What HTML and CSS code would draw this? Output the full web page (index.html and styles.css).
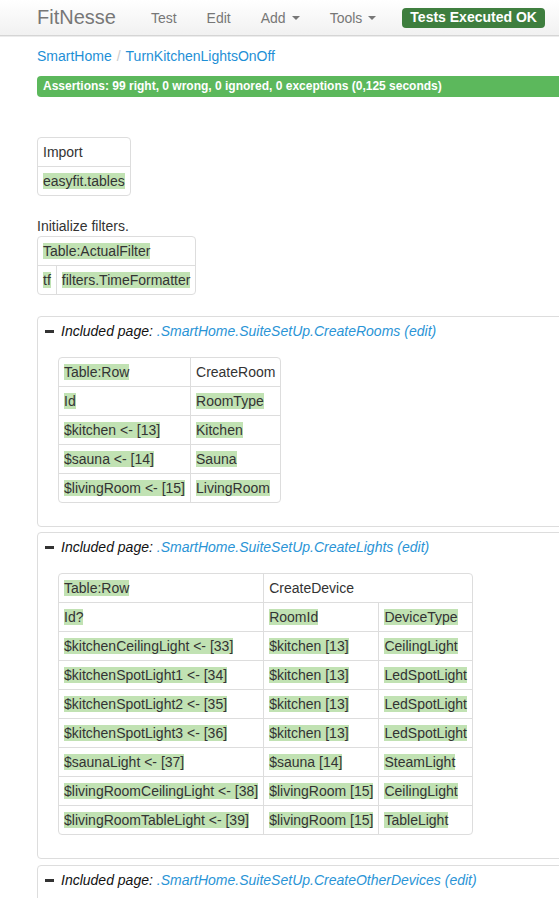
FILE: index.html
```html
<!DOCTYPE html>
<html lang="en">
<head>
<meta charset="utf-8">
<title>TurnKitchenLightsOnOff</title>
<link rel="stylesheet" href="styles.css">
</head>
<body>
<nav class="navbar">
  <a class="brand" href="#">FitNesse</a>
  <ul class="nav">
    <li><a href="#">Test</a></li>
    <li><a href="#">Edit</a></li>
    <li><a href="#">Add<span class="caret"></span></a></li>
    <li><a href="#">Tools<span class="caret"></span></a></li>
  </ul>
  <span class="status">Tests Executed OK</span>
</nav>
<main class="page">
  <div class="breadcrumb"><a href="#">SmartHome</a><span class="sep">/</span><a href="#">TurnKitchenLightsOnOff</a></div>
  <div class="summary">Assertions: 99 right, 0 wrong, 0 ignored, 0 exceptions (0,125 seconds)</div>

  <table class="fit first">
    <tr><td>Import</td></tr>
    <tr><td><span class="pass">easyfit.tables</span></td></tr>
  </table>

  <p class="text">Initialize filters.</p>
  <table class="fit">
    <tr><td colspan="2"><span class="pass">Table:ActualFilter</span></td></tr>
    <tr><td><span class="pass">tf</span></td><td><span class="pass">filters.TimeFormatter</span></td></tr>
  </table>

  <div class="included first-box">
    <div class="inc-head"><span class="minus"></span><span class="inc-label">Included page: </span><a class="inc-link" href="#">.SmartHome.SuiteSetUp.CreateRooms</a><a class="inc-link edit" href="#">(edit)</a></div>
    <table class="fit inner">
      <tr><td><span class="pass">Table:Row</span></td><td>CreateRoom</td></tr>
      <tr><td><span class="pass">Id</span></td><td><span class="pass">RoomType</span></td></tr>
      <tr><td><span class="pass">$kitchen &lt;- [13]</span></td><td><span class="pass">Kitchen</span></td></tr>
      <tr><td><span class="pass">$sauna &lt;- [14]</span></td><td><span class="pass">Sauna</span></td></tr>
      <tr><td><span class="pass">$livingRoom &lt;- [15]</span></td><td><span class="pass">LivingRoom</span></td></tr>
    </table>
  </div>

  <div class="included">
    <div class="inc-head"><span class="minus"></span><span class="inc-label">Included page: </span><a class="inc-link" href="#">.SmartHome.SuiteSetUp.CreateLights</a><a class="inc-link edit" href="#">(edit)</a></div>
    <table class="fit inner">
      <tr><td><span class="pass">Table:Row</span></td><td colspan="2">CreateDevice</td></tr>
      <tr><td><span class="pass">Id?</span></td><td><span class="pass">RoomId</span></td><td><span class="pass">DeviceType</span></td></tr>
      <tr><td><span class="pass">$kitchenCeilingLight &lt;- [33]</span></td><td><span class="pass">$kitchen [13]</span></td><td><span class="pass">CeilingLight</span></td></tr>
      <tr><td><span class="pass">$kitchenSpotLight1 &lt;- [34]</span></td><td><span class="pass">$kitchen [13]</span></td><td><span class="pass">LedSpotLight</span></td></tr>
      <tr><td><span class="pass">$kitchenSpotLight2 &lt;- [35]</span></td><td><span class="pass">$kitchen [13]</span></td><td><span class="pass">LedSpotLight</span></td></tr>
      <tr><td><span class="pass">$kitchenSpotLight3 &lt;- [36]</span></td><td><span class="pass">$kitchen [13]</span></td><td><span class="pass">LedSpotLight</span></td></tr>
      <tr><td><span class="pass">$saunaLight &lt;- [37]</span></td><td><span class="pass">$sauna [14]</span></td><td><span class="pass">SteamLight</span></td></tr>
      <tr><td><span class="pass">$livingRoomCeilingLight &lt;- [38]</span></td><td><span class="pass">$livingRoom [15]</span></td><td><span class="pass">CeilingLight</span></td></tr>
      <tr><td><span class="pass">$livingRoomTableLight &lt;- [39]</span></td><td><span class="pass">$livingRoom [15]</span></td><td><span class="pass">TableLight</span></td></tr>
    </table>
  </div>

  <div class="included last-box">
    <div class="inc-head"><span class="minus"></span><span class="inc-label">Included page: </span><a class="inc-link" href="#">.SmartHome.SuiteSetUp.CreateOtherDevices</a><a class="inc-link edit" href="#">(edit)</a></div>
  </div>
</main>
</body>
</html>
```

FILE: styles.css
```css
html, body {
  overflow: hidden;
}
body {
  margin: 0;
  font-family: "Liberation Sans", Arial, sans-serif;
  font-size: 14px;
  line-height: 20px;
  color: #333;
  background: #fff;
}
a {
  text-decoration: none;
}

/* navbar */
.navbar {
  display: flex;
  align-items: center;
  height: 35px;
  padding-left: 37px;
  background: linear-gradient(#ffffff, #f1f1f1);
  border-bottom: 1px solid #d5d5d5;
  box-shadow: 0 1px 0 #ececec;
}
.brand {
  font-size: 20px;
  line-height: 24px;
  color: #777;
  padding-right: 20px;
  margin-top: -1px;
}
.nav {
  display: flex;
  list-style: none;
  margin: 0;
  padding: 0;
}
.nav a {
  display: block;
  padding: 0 15px;
  color: #777;
  font-size: 14px;
  line-height: 20px;
}
.caret {
  display: inline-block;
  width: 0;
  height: 0;
  margin-left: 6px;
  vertical-align: middle;
  border-top: 4px solid #777;
  border-left: 4px solid transparent;
  border-right: 4px solid transparent;
  margin-top: -2px;
}
.status {
  margin-left: 11px;
  padding: 1px 8px 2px;
  background: #3e7e3e;
  color: #fff;
  font-weight: bold;
  font-size: 14px;
  line-height: 17px;
  border-radius: 4px;
}

/* page */
.page {
  margin-left: 37px;
  margin-right: -40px;
  padding-bottom: 40px;
}
.breadcrumb {
  margin-top: 10px;
  line-height: 20px;
}
.breadcrumb a {
  color: #1e8fd6;
}
.sep {
  color: #ccc;
  padding: 0 5px;
}
.summary {
  margin-top: 10px;
  height: 21px;
  line-height: 21px;
  padding-left: 6px;
  background: #5cb85c;
  color: #fff;
  font-weight: bold;
  font-size: 12px;
  border-radius: 4px 0 0 4px;
}

/* fit tables */
.fit {
  border-collapse: separate;
  border-spacing: 0;
  border: 1px solid #ddd;
  border-radius: 4px;
}
.fit td {
  padding: 4px 5px;
  border-top: 1px solid #ddd;
  border-left: 1px solid #ddd;
  white-space: nowrap;
  vertical-align: top;
}
.fit tr:first-child td {
  border-top: none;
}
.fit td:first-child {
  border-left: none;
}
.first {
  margin-top: 40px;
}
.pass {
  background: #c1e2b3;
}
.text {
  margin: 20px 0 0;
}

/* included pages */
.included {
  border: 1px solid #ddd;
  border-radius: 4px;
  padding: 4px 7px 23px;
  margin-top: 5px;
}
.first-box {
  margin-top: 21px;
}
.last-box {
  margin-top: 6px;
  min-height: 60px;
}
.inc-head {
  display: flex;
  align-items: center;
  font-style: italic;
  line-height: 20px;
}
.minus {
  width: 9px;
  height: 3px;
  background: #333;
  margin-right: 7px;
}
.inc-label {
  color: #111;
  white-space: pre;
}
.inc-link {
  color: #2a94d6;
}
.edit {
  margin-left: 4px;
}
.inner {
  margin: 16px 0 0 13px;
}
```
